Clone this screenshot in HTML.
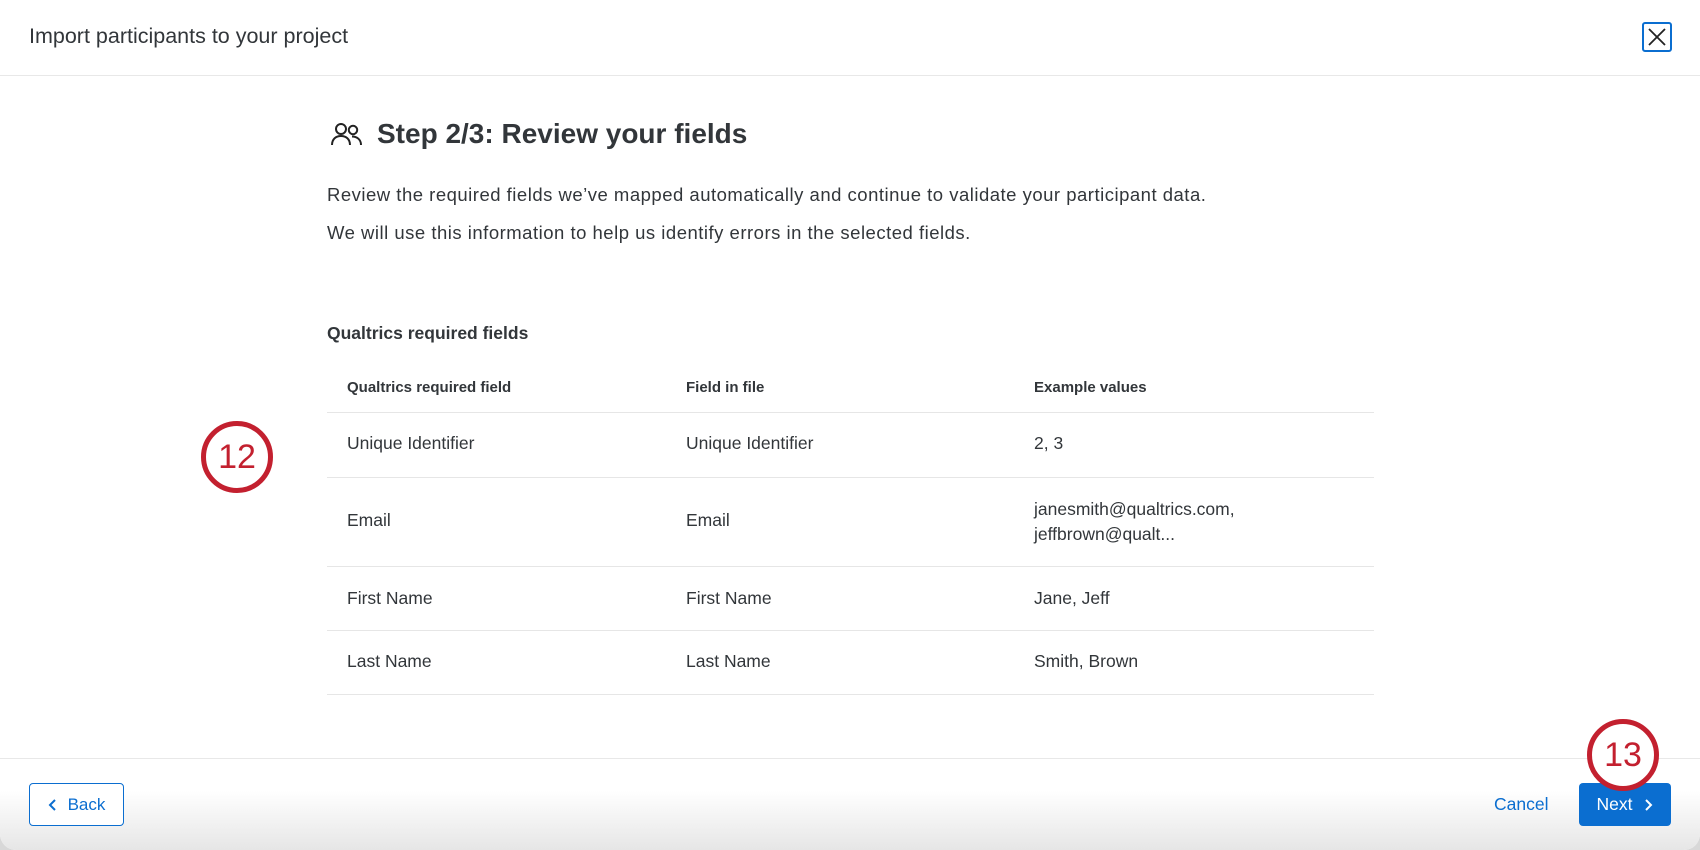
<!DOCTYPE html>
<html><head><meta charset="utf-8"><style>
*{margin:0;padding:0;box-sizing:border-box}
body{width:1700px;height:850px;overflow:hidden;background:#d8d8d8;font-family:"Liberation Sans",Arial,sans-serif;color:#32363a;position:relative}
.modal{position:absolute;left:0;top:0;width:1700px;height:850px;background:#fff;border-radius:0 0 16px 16px;overflow:hidden}
.hdr{position:absolute;left:0;top:0;width:1700px;height:76px;border-bottom:1px solid #e8e8e8}
.hdr .t{position:absolute;left:29px;top:24px;font-size:21.5px;color:#32363a}
.close{position:absolute;left:1642px;top:22px;width:30px;height:30px;border:2px solid #0b6ed0;border-radius:3px}
.ftr{position:absolute;left:0;top:758px;width:1700px;height:92px;border-top:1px solid #e8e8e8;background:linear-gradient(#fff 35%,#e6e6e6)}
.abs{position:absolute}
.btn{position:absolute;top:783px;height:43px;border-radius:4px;font-size:17px;display:flex;align-items:center;justify-content:center}
.circ{position:absolute;width:72px;height:72px;border:5px solid #c3202f;border-radius:50%;background:#fff;color:#c3202f;font-size:34px;display:flex;align-items:center;justify-content:center}
.line{position:absolute;left:327px;width:1047px;height:1px;background:#e6e6e6}
.c{position:absolute;font-size:17.5px;color:#32363a}
.h{position:absolute;font-size:15px;font-weight:bold;color:#32363a}
.p{position:absolute;left:327px;font-size:18.5px;letter-spacing:0.5px}
</style></head><body>
<div class="modal">
<div class="hdr"><div class="t">Import participants to your project</div>
<div class="close"><svg width="26" height="26" viewBox="0 0 26 26" style="position:absolute;left:0;top:0"><path d="M5 5L21 21M21 5L5 21" stroke="#222" stroke-width="1.8"/></svg></div></div>

<svg class="abs" style="left:331px;top:122px" width="32" height="26" viewBox="0 0 32 26"><circle cx="10" cy="7" r="5" fill="none" stroke="#222" stroke-width="2"/><path d="M1 23c0-6 4-9 9-9s9 3 9 9" fill="none" stroke="#222" stroke-width="2"/><circle cx="22" cy="8" r="4.2" fill="none" stroke="#222" stroke-width="2"/><path d="M21 14.5c5 0 9 3 9 8.5" fill="none" stroke="#222" stroke-width="2"/></svg>
<div class="abs" style="left:377px;top:118px;font-size:28px;font-weight:bold;color:#32363a">Step 2/3: Review your fields</div>
<div class="p" style="top:184px">Review the required fields we’ve mapped automatically and continue to validate your participant data.</div>
<div class="p" style="top:222px">We will use this information to help us identify errors in the selected fields.</div>
<div class="abs" style="left:327px;top:323px;font-size:17.5px;font-weight:bold">Qualtrics required fields</div>

<div class="h" style="left:347px;top:379px">Qualtrics required field</div>
<div class="h" style="left:686px;top:379px">Field in file</div>
<div class="h" style="left:1034px;top:379px">Example values</div>
<div class="line" style="top:412px"></div>
<div class="c" style="left:347px;top:433px">Unique Identifier</div>
<div class="c" style="left:686px;top:433px">Unique Identifier</div>
<div class="c" style="left:1034px;top:433px">2, 3</div>
<div class="line" style="top:477px"></div>
<div class="c" style="left:347px;top:510px">Email</div>
<div class="c" style="left:686px;top:510px">Email</div>
<div class="c" style="left:1034px;top:497px;line-height:25px">janesmith@qualtrics.com,<br>jeffbrown@qualt...</div>
<div class="line" style="top:566px"></div>
<div class="c" style="left:347px;top:588px">First Name</div>
<div class="c" style="left:686px;top:588px">First Name</div>
<div class="c" style="left:1034px;top:588px">Jane, Jeff</div>
<div class="line" style="top:630px"></div>
<div class="c" style="left:347px;top:651px">Last Name</div>
<div class="c" style="left:686px;top:651px">Last Name</div>
<div class="c" style="left:1034px;top:651px">Smith, Brown</div>
<div class="line" style="top:694px"></div>

<div class="ftr"></div>
<div class="btn" style="left:29px;width:95px;border:1px solid #0b6ed0;color:#0b6ed0;background:#fff"><svg width="10" height="14" viewBox="0 0 10 14" style="margin-right:10px"><path d="M7 2L2 7l5 5" fill="none" stroke="#0b6ed0" stroke-width="2"/></svg>Back</div>
<div class="abs" style="left:1494px;top:794px;font-size:17.5px;color:#0b6ed0">Cancel</div>
<div class="btn" style="left:1579px;width:92px;background:#0b6ed0;color:#fff;font-size:17.5px">Next<svg width="10" height="14" viewBox="0 0 10 14" style="margin-left:11px"><path d="M3 2l5 5-5 5" fill="none" stroke="#fff" stroke-width="2"/></svg></div>

<div class="circ" style="left:201px;top:421px">12</div>
<div class="circ" style="left:1587px;top:719px">13</div>
</div>
</body></html>
